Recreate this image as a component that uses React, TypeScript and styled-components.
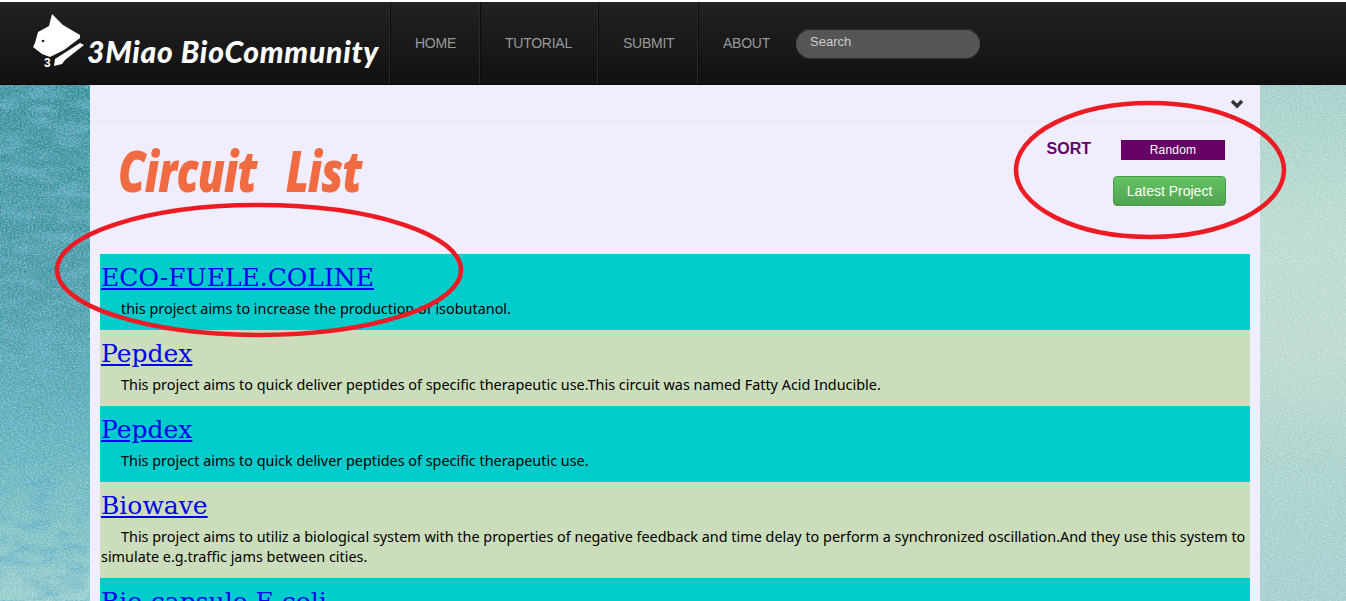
import React from 'react';
import styled, { createGlobalStyle } from 'styled-components';

const grain = encodeURIComponent(
  `<svg xmlns='http://www.w3.org/2000/svg' width='400' height='600'><filter id='n'><feTurbulence type='fractalNoise' baseFrequency='0.5 0.7' numOctaves='3' seed='4'/><feColorMatrix values='0 0 0 0 1  0 0 0 0 1  0 0 0 0 1  0.8 0 0 0 -0.28'/></filter><rect width='400' height='600' filter='url(#n)'/></svg>`
);

const blotches = encodeURIComponent(
  `<svg xmlns='http://www.w3.org/2000/svg' width='400' height='600'><filter id='b'><feTurbulence type='fractalNoise' baseFrequency='0.035 0.09' numOctaves='3' seed='11'/><feColorMatrix values='0 0 0 0 0.1  0 0 0 0 0.4  0 0 0 0 0.55  1.6 0 0 0 -0.6'/></filter><rect width='400' height='600' filter='url(#b)'/></svg>`
);

const projects = [
  { title: 'ECO-FUELE.COLINE', text: 'this project aims to increase the production of isobutanol.' },
  {
    title: 'Pepdex',
    text: 'This project aims to quick deliver peptides of specific therapeutic use.This circuit was named Fatty Acid Inducible.',
  },
  { title: 'Pepdex', text: 'This project aims to quick deliver peptides of specific therapeutic use.' },
  {
    title: 'Biowave',
    text: 'This project aims to utiliz a biological system with the properties of negative feedback and time delay to perform a synchronized oscillation.And they use this system to simulate e.g.traffic jams between cities.',
  },
  { title: 'Bio-capsule E.coli', text: 'This project aims to build a capsule.' },
];

const App = () => {
  return (
    <Page>
      <GlobalStyle />
      <NavBar>
        <Brand href="#">
          <CatLogo />
          <BrandName>3Miao BioCommunity</BrandName>
        </Brand>
        <NavList>
          <NavItem href="#" $width={90}>HOME</NavItem>
          <NavItem href="#" $width={118}>TUTORIAL</NavItem>
          <NavItem href="#" $width={100}>SUBMIT</NavItem>
          <NavItem href="#" $width={98}>ABOUT</NavItem>
        </NavList>
        <SearchBox placeholder="Search" />
      </NavBar>

      <Content>
        <CollapseBar>
          <svg width="14" height="10" viewBox="0 0 14 10">
            <path d="M2 2 L7 7 L12 2" fill="none" stroke="#333" strokeWidth="3.4" />
          </svg>
        </CollapseBar>

        <TitleArea>
          <Title>Circuit&nbsp; List</Title>
          <SortPanel>
            <SortRow>
              <SortLabel>SORT</SortLabel>
              <SortSelect>Random</SortSelect>
            </SortRow>
            <LatestButton>Latest Project</LatestButton>
          </SortPanel>
        </TitleArea>

        <ProjectList>
          {projects.map((project, i) => (
            <ProjectRow key={i} $alt={i % 2 === 1}>
              <ProjectTitle href="#">{project.title}</ProjectTitle>
              <ProjectText>{project.text}</ProjectText>
            </ProjectRow>
          ))}
        </ProjectList>
      </Content>

      <LeftCircle viewBox="0 0 412 138">
        <ellipse cx="206" cy="69" rx="202" ry="65" fill="none" stroke="#ed1c24" strokeWidth="4.5" />
      </LeftCircle>
      <RightCircle viewBox="0 0 274 140">
        <ellipse cx="137" cy="70" rx="134" ry="67" fill="none" stroke="#ed1c24" strokeWidth="4.5" />
      </RightCircle>
    </Page>
  );
};

const CatLogo = () => (
  <svg width="53" height="60" viewBox="0 0 53 60">
    <path
      d="M20 2 L22 4 L31 13 L48 23 L48 26 L32 38 L18 45 L10 42 L1 35 L3 31 L6 20 L17 14 Z"
      fill="#fff"
    />
    <path d="M23 47 L48 31 L52 33 L33 48 L30 52 L22 54 Z" fill="#fff" />
    <circle cx="11" cy="29" r="1.3" fill="#1a1a1a" />
    <text x="12" y="55" fontFamily="'Liberation Sans', sans-serif" fontWeight="700" fontSize="12" fill="#fff">
      3
    </text>
  </svg>
);

export default App;

// Styled Components
const GlobalStyle = createGlobalStyle`
  html, body {
    margin: 0;
    padding: 0;
    height: 100%;
    overflow: hidden;
  }
`;

const Page = styled.div`
  position: relative;
  height: 100vh;
  overflow: hidden;
  background-color: #4ba0aa;
  background-image:
    url("data:image/svg+xml,${grain}"),
    url("data:image/svg+xml,${blotches}"),
    linear-gradient(180deg, #2f8c99 85px, #3f96a4 300px, #55adb6 430px, #93cbca 601px);
  font-family: 'Liberation Sans', Arial, sans-serif;

  &::after {
    content: '';
    position: absolute;
    top: 85px;
    right: 0;
    bottom: 0;
    width: 86px;
    background-image:
      url("data:image/svg+xml,${grain}"),
      linear-gradient(180deg, #9fcdc7 0, #b8dace 30%, #b8d8cd 52%, #a6cfca 75%, #a0cbcb 100%);
  }
`;

const NavBar = styled.header`
  display: flex;
  align-items: center;
  height: 85px;
  background: linear-gradient(180deg, #222 0, #111 100%);
  border-top: 2px solid #fff;
  border-bottom: 1px solid #0a0a0a;
  box-sizing: border-box;
  position: relative;
  z-index: 1;
`;

const Brand = styled.a`
  display: flex;
  align-items: flex-start;
  width: 357px;
  height: 100%;
  margin-left: 32px;
  padding-top: 10px;
  box-sizing: border-box;
  text-decoration: none;
`;

const BrandName = styled.span`
  margin: 21px 0 0 2px;
  color: #fff;
  font-family: 'Lato', sans-serif;
  font-style: italic;
  font-weight: 900;
  font-size: 30px;
  line-height: 36px;
  letter-spacing: 0.75px;
  white-space: nowrap;
`;

const NavList = styled.nav`
  display: flex;
  height: 100%;
`;

const NavItem = styled.a<{ $width: number }>`
  display: flex;
  align-items: center;
  width: ${(p) => p.$width}px;
  padding-left: 25px;
  box-sizing: border-box;
  border-left: 1px solid #2a2a2a;
  box-shadow: inset 1px 0 0 #0c0c0c;
  color: #999;
  font-size: 14px;
  letter-spacing: -0.25px;
  text-decoration: none;
`;

const SearchBox = styled.input`
  width: 184px;
  height: 29px;
  margin: 0 0 0 1px;
  padding: 0 14px 4px;
  box-sizing: border-box;
  background: #555;
  border: none;
  border-radius: 15px;
  box-shadow: 0 1px 0 #333, inset 0 1px 1px #2c2c2c;
  color: #ccc;
  font-family: 'Liberation Sans', Arial, sans-serif;
  font-size: 13px;
  outline: none;

  &::placeholder {
    color: #ccc;
    opacity: 1;
  }
`;

const Content = styled.main`
  position: relative;
  z-index: 1;
  width: 1170px;
  margin-left: 90px;
  min-height: 600px;
  background: #f0eefe;
`;

const CollapseBar = styled.div`
  display: flex;
  justify-content: flex-end;
  align-items: center;
  height: 37px;
  padding: 1px 16px 0 0;
  box-sizing: border-box;
  border-bottom: 1px solid #e6e6ee;
`;

const TitleArea = styled.section`
  display: flex;
  justify-content: space-between;
  height: 132px;
  box-sizing: border-box;
  padding: 17px 34px 0 28px;
`;

const Title = styled.h1`
  margin: 0;
  color: #f06a42;
  font-family: 'Open Sans', sans-serif;
  font-style: italic;
  font-weight: 800;
  font-size: 56px;
  line-height: 62px;
  letter-spacing: -1px;
  word-spacing: 5px;
  transform: scaleX(0.78);
  transform-origin: left top;
  white-space: nowrap;
`;

const SortPanel = styled.div`
  display: flex;
  flex-direction: column;
  align-items: flex-end;
  gap: 16px;
  padding-top: 1px;
`;

const SortRow = styled.div`
  display: flex;
  align-items: flex-start;
  gap: 30px;
  height: 20px;
  margin-right: 1px;
`;

const SortLabel = styled.span`
  color: #660066;
  font-size: 16px;
  font-weight: 700;
  line-height: 18px;
`;

const SortSelect = styled.div`
  width: 104px;
  height: 20px;
  background: #660066;
  color: #fff;
  font-size: 12px;
  letter-spacing: 0.2px;
  line-height: 20px;
  text-align: center;
`;

const LatestButton = styled.button`
  width: 113px;
  height: 30px;
  padding: 0;
  background: linear-gradient(180deg, #62c462 0, #51a351 100%);
  border: 1px solid #4d9a4d;
  border-radius: 4px;
  color: #fff;
  font-family: 'Liberation Sans', Arial, sans-serif;
  font-size: 14px;
`;

const ProjectList = styled.div`
  margin: 0 10px;
`;

const ProjectRow = styled.article<{ $alt: boolean }>`
  padding: 10px 1px 11px;
  background: ${(p) => (p.$alt ? '#ccddbb' : '#00cccc')};
`;

const ProjectTitle = styled.a`
  display: inline-block;
  color: #0000ee;
  font-family: 'DejaVu Serif', serif;
  font-size: 25px;
  line-height: 28px;
`;

const ProjectText = styled.p`
  margin: 7px 0 0;
  color: #000;
  font-family: 'Noto Sans', sans-serif;
  font-size: 14.4px;
  line-height: 20px;
  text-indent: 20px;
`;

const LeftCircle = styled.svg`
  position: absolute;
  z-index: 2;
  left: 53px;
  top: 201px;
  width: 412px;
  height: 138px;
`;

const RightCircle = styled.svg`
  position: absolute;
  z-index: 2;
  left: 1013px;
  top: 100px;
  width: 274px;
  height: 140px;
`;
